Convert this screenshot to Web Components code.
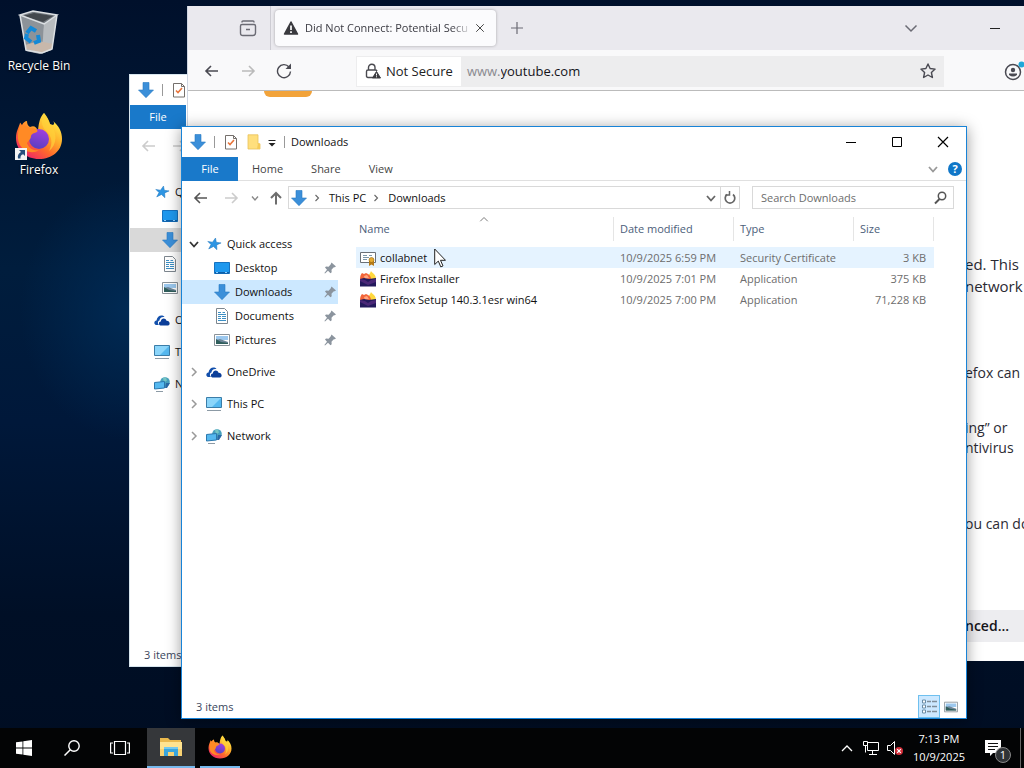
<!DOCTYPE html>
<html lang="en">
<head>
<meta charset="utf-8">
<title>Desktop</title>
<style>
    html, body {
        margin: 0;
        height: 100%;
    }
    body {
        font: 11px/16px "Open Sans", "Noto Sans", sans-serif;
        color: #111;
        overflow: hidden;
    }
</style>
</head>
<body>
<desk-top>
    <desktop-shortcut icon="bin">Recycle Bin</desktop-shortcut>
    <desktop-shortcut icon="firefox" linked>Firefox</desktop-shortcut>
    <explorer-window slot="windows" class="back" inactive></explorer-window>
    <browser-window slot="windows"></browser-window>
    <explorer-window slot="windows" class="front"></explorer-window>
    <task-bar slot="taskbar"></task-bar>
</desk-top>

<script>
const FIREFOX = `
    <defs>
        <linearGradient id="ff" x1=".85" y1=".1" x2=".2" y2=".95">
            <stop offset="0" stop-color="#fff04a"/><stop offset=".35" stop-color="#ffb02c"/>
            <stop offset=".65" stop-color="#ff6a2b"/><stop offset="1" stop-color="#ee2468"/>
        </linearGradient>
        <linearGradient id="fp" x1=".7" y1="0" x2=".4" y2="1">
            <stop offset="0" stop-color="#a13fe0"/><stop offset="1" stop-color="#5a3fc0"/>
        </linearGradient>
    </defs>
    <path fill="url(#ff)" d="M29 1c3 4 5 7 6 11l3 1c2-1 1-3 0-4 6 5 9 11 9 18 0 12-10 20-23 20S1 38 1 26c0-7 3-11 4-15 0-1 1 1 2 2 1-2 3-4 5-4 0 3 1 5 3 6 5-2 6 1 8 3 1-8 2-13 6-17z"/>
    <circle cx="24" cy="27" r="10" fill="url(#fp)"/>
    <path fill="#ff8a25" d="M5 14c5-1 7 1 10 2 5 0 9 2 7 4-2 1-5 1-6 4 0 3-2 4-4 7 2 6 7 8 12 7-7 5-17 1-20-7-2-6-1-12 1-17z"/>
    <path fill="#ffd23a" opacity=".7" d="M29 1c3 4 5 7 6 11 8 8 7 21-1 27 4-8 3-15-3-20-5-5-5-12-2-18z"/>`;

/* name: [viewBox, markup] */
const ICONS = {
    firefox: ['0 0 48 48', FIREFOX],
    bin: ['0 0 48 48', `
        <path fill="#a3a8ad" d="M5 8l9 10 27-4-4 28-12 4-14-3z"/>
        <path fill="#757b81" d="M5 7l13-4 24 4-13 9z"/>
        <path fill="#43484d" d="M8 8l11-3 19 3-10 6z"/>
        <path fill="#8d9399" d="M5 7l24 9-2 29-16-3z"/>
        <path fill="#b8bcbf" d="M29 16l13-9-5 34-10 4z"/>
        <path fill="#c8b8ab" d="M10 37l14-4 14 3-1 5-11 4-15-4z"/>
        <path fill="none" stroke="#dce0e3" stroke-width="1.5" d="M5 7l13-4 24 4-13 9zM5 7l6 35 16 3 10-4 5-34"/>
        <path fill="none" stroke="#1489d6" stroke-width="4" d="M12 25l4-5 5 3M23 27l1 6-5 2M16 34l-5-4 1-4"/>`],
    down: ['0 0 16 16', `<path fill="#3b8fd9" stroke="#2779c2" stroke-width=".6" d="M5 .5h6V8h4.500L8 15.700.5 8H5z"/>`],
    check: ['0 0 16 16', `<path fill="#fff" stroke="#75706c" d="M2.500 1.500h8l3 3v10.500h-11z"/><path fill="none" stroke="#75706c" d="M10.500 1.500v3h3"/><path fill="none" stroke="#e8743a" stroke-width="1.600" d="M5 8.500L7 10.500l4-4.500"/>`],
    folder: ['0 0 16 16', `<path fill="#ffdf7d" stroke="#e8c15c" stroke-width=".8" d="M2 .8h10v9h2v5.200H2z"/><path fill="#f5cb59" d="M12 9l2 1v5h-3z"/>`],
    qat: ['0 0 16 16', `<path stroke="#222" d="M4.500 6.500h7"/><path fill="#222" d="M4.500 9h7L8 12.500z"/>`],
    star: ['0 0 16 16', `<path fill="#2d95e3" stroke="#1c74bd" stroke-width=".5" d="M9.500 2l.8 4.300 4.800.6-4.400 2 .2 4.800-3.400-3.200-4.800 2.400 2.300-4.300L1.800 5.400l4.700.8z"/>`],
    desktop: ['0 0 16 16', `<path fill="#1e98ee" stroke="#1672c0" d="M.5 2.500h15v11H.5z"/><path fill="#0d5fa8" d="M1 12h14v1.500H1z"/><path fill="#8fd0ff" d="M2 12h2v1H2zM11 12h2v1h-2z"/>`],
    doc: ['0 0 16 16', `<path fill="#fff" stroke="#7d868e" d="M2.500.5h8l3 3v12h-11z"/><path stroke="#3c8fc4" d="M4 4.500h3M8.500 4.500H11M4 6.500h8M4 8.500h3M8 8.500h4M4 10.500h3M8 10.500h4M4 12.500h8"/>`],
    picture: ['0 0 16 16', `<path fill="#fff" stroke="#8a9299" d="M.5 2.500h15v11H.5z"/><path fill="#9cc8ee" d="M2 4h12v4H2z"/><path fill="#6d8598" d="M2 8l4-1 8 3v2H2z"/><path fill="#2f5e5b" d="M2 7l5 3 7 1v1H2z"/>`],
    cloud: ['0 0 16 16', `<path fill="#1350ac" d="M1.800 13C-.5 12 0 8.500 2.500 8.500 3 4 8 2 10.500 5c-3-.6-5 1.300-5 3.500C3.500 9 3.500 12 5 13z"/><path fill="#0b3e99" d="M6.500 13.500c-2.300-.5-2-4 .3-4C7 6 11.500 5.500 12.500 8.700c3-.3 4.500 3.800 1.500 4.800z"/>`],
    pc: ['0 0 16 16', `<path fill="#55b8ef" stroke="#3b7da8" d="M.5 1.500h15v10H.5z"/><path fill="#8bd5fa" d="M1 2h14L6 11H1z"/><path stroke="#8c9aa5" d="M1 14.500h14"/>`],
    network: ['0 0 16 16', `<circle cx="11" cy="6" r="4.800" fill="#48a1bd"/><path fill="#76c6c4" d="M9 2l3-.5 1 3-3 2z"/><path fill="#2a69a5" d="M12 7h4l-3 5h-2z"/><path fill="#55b8ef" stroke="#2b78ae" d="M.5 6.500l10-1v6.500l-10 1z"/><path stroke="#8c9aa5" d="M2 15.500h7"/>`],
    pin: ['0 0 16 16', `<path fill="#8b949e" d="M9.500 2.500l4.500 4-1.500.8-1 .2-2 2.200.2 2.500-1.200 1L6 10.700 3 13.500l-.6-.4L5 9.700 3 7.500l1-1 2.600.2 2-2.200z"/>`],
    cert: ['0 0 16 16', `<path fill="#fff" stroke="#6a7077" d="M.5 2.500h15v10H.5z"/><path stroke="#7b96a8" d="M3 5.500h4M9 5.500h3M3 7.500h6M3 9.500h4"/><path fill="#b77b19" d="M9 11h5v5l-2.500-1.500L9 16z"/><circle cx="11.500" cy="10" r="2.500" fill="#e7aa2f" stroke="#8f6414" stroke-width=".6"/>`],
    installer: ['0 0 16 16', `<path fill="#ffd83d" d="M11 0c1 2 5 3 5 8H7c1-4 3-5 4-8z"/><path fill="#f2653a" d="M0 8c0-3 1-5 2-6l2 1 2-1c3 1 5 3 5 6z"/><path fill="#ffa77f" d="M4 5l3-1 2 3-4 1z"/><path fill="#231a5c" d="M0 8l4-1 5 1 7-1v8.500H0z"/><path fill="#4a2877" d="M0 8l5 1 3 2 3-2 5-1v3l-8 3-8-4z"/>`],
    left: ['0 0 16 16', `<path fill="none" stroke="currentColor" stroke-width="1.600" d="M14 8H2.500M7 3L2 8l5 5"/>`],
    right: ['0 0 16 16', `<path fill="none" stroke="currentColor" stroke-width="1.600" d="M2 8h11.500M9 3l5 5-5 5"/>`],
    up: ['0 0 16 16', `<path fill="none" stroke="currentColor" stroke-width="2" d="M8 14.500V3M3 8l5-5 5 5"/>`],
    chevdown: ['0 0 16 16', `<path fill="none" stroke="currentColor" stroke-width="1.800" d="M4 6l4 4.500L12 6"/>`],
    expand: ['0 0 16 16', `<path fill="none" stroke="currentColor" stroke-width="1.500" d="M2.500 5.500L8 11l5.500-5.500"/>`],
    chevup: ['0 0 16 16', `<path fill="none" stroke="currentColor" stroke-width="1.300" d="M3 11l5-5 5 5"/>`],
    chevright: ['0 0 16 16', `<path fill="none" stroke="currentColor" stroke-width="1.500" d="M6 4l4 4-4 4"/>`],
    refresh: ['0 0 16 16', `<path fill="none" stroke="currentColor" stroke-width="1.700" d="M5 4.500a4.800 4.800 0 1 0 6 0"/><path fill="none" stroke="currentColor" stroke-width="1.500" d="M7.500 1v4h-4"/>`],
    search: ['0 0 16 16', `<circle cx="10" cy="6" r="3.700" fill="none" stroke="currentColor" stroke-width="1.500"/><path stroke="currentColor" stroke-width="2" d="M7.500 9L3 13.500"/>`],
    min: ['0 0 16 16', `<path stroke="currentColor" d="M3 8.500h10"/>`],
    max: ['0 0 16 16', `<path fill="none" stroke="currentColor" d="M3.500 3.500h9v9h-9z"/>`],
    close: ['0 0 16 16', `<path stroke="currentColor" stroke-width="1.200" d="M3 3l10 10M13 3L3 13"/>`],
    details: ['0 0 18 18', `<path fill="#fff" stroke="#6b8ca5" d="M2.500 2.500h3v3h-3zM2.500 7.500h3v3h-3zM2.500 12.500h3v3h-3z"/><path stroke="#7f8d99" stroke-width="1.500" d="M7 4h4M12 4h5M7 9h4M12 9h5M7 14h4M12 14h5"/>`],
    tabview: ['0 0 20 20', `<path fill="none" stroke="currentColor" stroke-width="1.400" d="M4 4.500V4q0-1 1-1h10q1 0 1 1v.5M4 6.500h12q1.500 0 1.500 1.500v7q0 2.500-2.500 2.500H5Q2.500 17.500 2.500 15V8Q2.500 6.500 4 6.500zM8 11.500h4"/>`],
    warning: ['0 0 16 16', `<path fill="#3a3a3f" stroke="#3a3a3f" stroke-width="1.500" stroke-linejoin="round" d="M8 2l6.500 12h-13z"/><path stroke="#fff" stroke-width="1.700" d="M8 5.500v4.500M8 11.300v1.700"/>`],
    lock: ['0 0 16 16', `<path fill="none" stroke="#4a4a50" stroke-width="1.400" d="M3.500 7V4.500a3.200 3.200 0 0 1 6.500 0V7M8 14.500H3q-1.500 0-1.500-1.500V8.500Q1.500 7 3 7h7.500q1 0 1.500 1"/><path fill="#3a3a3f" stroke="#3a3a3f" stroke-linejoin="round" d="M11.500 8.500l4 6.500h-8z"/><path stroke="#fff" d="M11.500 10.500v2M11.500 13.300v1"/>`],
    reload: ['0 0 16 16', `<path fill="none" stroke="currentColor" stroke-width="1.400" d="M13 4a6.500 6.500 0 1 0 1.500 4.500"/><path fill="currentColor" d="M15 .5V6H9.500z"/>`],
    bookmark: ['0 0 16 16', `<path fill="none" stroke="currentColor" stroke-width="1.400" stroke-linejoin="round" d="M8 1l2.100 4.500 5 .6-3.700 3.400 1 5L8 12l-4.400 2.500 1-5L.9 6.100l5-.6z"/>`],
    account: ['0 0 20 20', `<circle cx="9" cy="11" r="7.500" fill="none" stroke="currentColor" stroke-width="1.500"/><circle cx="9" cy="9" r="2.200" fill="currentColor"/><path fill="currentColor" d="M5 12.500h8v1.500q-4 3-8 0z"/><circle cx="17.500" cy="3.500" r="3" fill="#1fa7d8"/>`],
    plus: ['0 0 16 16', `<path stroke="currentColor" stroke-width="1.200" d="M8 2v12M2 8h12"/>`],
    start: ['0 0 16 16', `<path fill="#fff" d="M0 2.300l6.500-.9v6.100H0zM7.300 1.300L16 0v7.500H7.300zM0 8.400h6.500v6.200L0 13.700zM7.300 8.400H16V16l-8.700-1.300z"/>`],
    find: ['0 0 16 16', `<circle cx="10" cy="6" r="5.200" fill="none" stroke="#fff" stroke-width="1.400"/><path stroke="#fff" stroke-width="1.500" d="M6.300 9.700L.5 15.500"/>`],
    taskview: ['0 0 20 16', `<path fill="none" stroke="#fff" stroke-width="1.200" d="M4.500 1.500h11v13h-11zM3 3H.6v10H3M17 3h2.400v10H17"/>`],
    explorer: ['0 0 24 20', `<path fill="#eab94d" d="M1 1h8l2 2h11v4H1z"/><path fill="#ffe38f" d="M1 5h22v14H1z"/><path fill="#f7d273" d="M1 12h22v7H1z"/><path fill="#39a5dc" d="M5 19v-8h14v8h-4v-4H9v4z"/><path fill="#74c9ee" d="M5 10h14v2H5z"/>`],
    lan: ['0 0 16 16', `<path fill="none" stroke="#fff" d="M4.500 2.500h11v8h-11zM9.500 10.500v4M6 14.500h8"/><path fill="#000" stroke="#fff" d="M.5 1.500h4v4h-4zM2.500 5.500v7"/>`],
    sound: ['0 0 16 16', `<path fill="none" stroke="#fff" d="M.5 5.500h3l4-4v13l-4-4h-3z"/><circle cx="12" cy="11" r="4" fill="#d32f3a"/><path stroke="#fff" stroke-width="1.200" d="M10.200 9.200l3.600 3.600M13.800 9.200l-3.600 3.600"/>`],
    note: ['0 0 16 16', `<path fill="#fff" d="M0 0h16v13H8l-3 3v-3H0z"/><path stroke="#111" d="M3 3.500h10M3 6.500h10M3 9.500h7"/>`],
    shortcut: ['0 0 12 12', `<path fill="#f4f4f4" d="M0 0h12v12H0z"/><path fill="#28507c" d="M4 2h6v6L8.200 6.200Q5 7 5.500 10.500H3Q2 6 6 4z"/>`],
    pointer: ['0 0 12 20', `<path fill="#fff" stroke="#222" d="M.7 1v15.500l3.600-3.400 2.500 5.800 2.200-1-2.500-5.600h5z"/>`]
};

class SysIcon extends HTMLElement {
    constructor() {
        super();
        this.attachShadow({ mode: 'open' });
    }
    connectedCallback() {
        const [box, markup] = ICONS[this.getAttribute('name')];
        this.shadowRoot.innerHTML = `
        <style>
            :host { display: block; flex: none; width: 16px; height: 16px; }
            svg { display: block; width: 100%; height: 100%; }
        </style>
        <svg viewBox="${box}" aria-hidden="true">${markup}</svg>
        `;
    }
}

class DesktopShortcut extends HTMLElement {
    constructor() {
        super();
        this.attachShadow({ mode: 'open' });
    }
    connectedCallback() {
        this.shadowRoot.innerHTML = `
        <style>
            :host { display: block; width: 78px; height: 104px; font-size: 12px; }
            button {
                display: flex;
                flex-direction: column;
                align-items: center;
                gap: 2px;
                width: 100%;
                padding: 8px 0 0;
                border: 0;
                background: none;
                color: #fff;
                font: inherit;
                text-shadow: 0 1px 2px #000;
            }
            .pic { position: relative; }
            .pic sys-icon { width: 48px; height: 48px; }
            .pic .link { position: absolute; left: 0; bottom: 0; width: 12px; height: 12px; }
        </style>
        <button>
            <span class="pic">
                <sys-icon name="${this.getAttribute('icon')}"></sys-icon>
                ${this.hasAttribute('linked') ? '<sys-icon class="link" name="shortcut"></sys-icon>' : ''}
            </span>
            <slot></slot>
        </button>
        `;
    }
}

class DeskTop extends HTMLElement {
    constructor() {
        super();
        this.attachShadow({ mode: 'open' });
        this.shadowRoot.innerHTML = `
        <style>
            :host {
                display: flex;
                flex-direction: column;
                height: 100vh;
                background:
                    radial-gradient(ellipse 110px 130px at 130px 310px, #002a54, transparent),
                    linear-gradient(#00102b, #001d3d 35%, #00183a 55%, #000f26 80%, #000d22);
            }
            .area { position: relative; flex: 1; overflow: hidden; }
            /* windows float freely over the desktop */
            ::slotted(explorer-window), ::slotted(browser-window) { position: absolute; }
            ::slotted(.back) { inset: 74px 109px 61px 129px; }
            ::slotted(browser-window) { inset: 6px 0 67px 187px; }
            ::slotted(.front) { inset: 126px 57px 9px 181px; }
            .pointer { position: absolute; left: 434px; top: 248px; width: 12px; height: 20px; }
        </style>
        <div class="area">
            <slot></slot>
            <slot name="windows"></slot>
            <sys-icon class="pointer" name="pointer"></sys-icon>
        </div>
        <slot name="taskbar"></slot>
        `;
    }
}

class NavItem extends HTMLElement {
    constructor() {
        super();
        this.attachShadow({ mode: 'open' });
    }
    connectedCallback() {
        const toggle = this.getAttribute('toggle');
        this.shadowRoot.innerHTML = `
        <style>
            :host { display: block; }
            :host([root]) { margin-top: 8px; }
            button {
                display: flex;
                align-items: center;
                gap: 5px;
                width: 100%;
                height: 24px;
                padding: 0 0 0 4px;
                border: 0;
                background: none;
                color: inherit;
                font: inherit;
                text-align: left;
            }
            :host([child]) button { padding-left: 12px; }
            :host([selected]) button { background: var(--selected, #cce8ff); }
            .toggle { color: #333; margin-right: -1px; }
            .toggle[name=chevright] { color: #999; }
            .pin { margin-left: auto; }
        </style>
        <button>
            <sys-icon class="toggle" name="${toggle || 'chevright'}" style="${toggle ? '' : 'visibility: hidden'}"></sys-icon>
            <sys-icon name="${this.getAttribute('icon')}"></sys-icon>
            <slot></slot>
            ${this.hasAttribute('child') ? '<sys-icon class="pin" name="pin"></sys-icon>' : ''}
        </button>
        `;
    }
}

class FileList extends HTMLElement {
    constructor() {
        super();
        this.attachShadow({ mode: 'open' });
        const files = [
            ['cert', 'collabnet', '10/9/2025 6:59 PM', 'Security Certificate', '3 KB'],
            ['installer', 'Firefox Installer', '10/9/2025 7:01 PM', 'Application', '375 KB'],
            ['installer', 'Firefox Setup 140.3.1esr win64', '10/9/2025 7:00 PM', 'Application', '71,228 KB']
        ];
        this.shadowRoot.innerHTML = `
        <style>
            :host { display: block; }
            table { width: 100%; table-layout: fixed; border-collapse: separate; border-spacing: 0; }
            th, td { padding: 0 6px; font-weight: 400; text-align: left; white-space: nowrap; }
            th { position: relative; height: 24px; border-right: 1px solid #e5e5e5; color: #4c607a; }
            th:first-child { padding-left: 3px; }
            .sort { position: absolute; top: -4px; left: calc(50% - 7px); width: 12px; height: 12px; color: #777; }
            .date, .type { width: 107px; }
            .size { width: 67px; }
            tbody::before { content: ""; display: block; height: 6px; }
            td { height: 21px; color: #6d6d6d; }
            td:first-child { padding-left: 4px; color: #111; }
            td:last-child { text-align: right; padding-right: 8px; }
            tr.hover { background: #e5f3ff; }
            .name { display: flex; align-items: center; gap: 4px; }
        </style>
        <table>
            <thead>
                <tr>
                    <th>Name<sys-icon class="sort" name="chevup"></sys-icon></th>
                    <th class="date">Date modified</th>
                    <th class="type">Type</th>
                    <th class="size">Size</th>
                </tr>
            </thead>
            <tbody>
                ${files.map(([icon, name, date, type, size], i) => `
                <tr class="${i === 0 ? 'hover' : ''}">
                    <td><span class="name"><sys-icon name="${icon}"></sys-icon>${name}</span></td>
                    <td>${date}</td><td>${type}</td><td>${size}</td>
                </tr>`).join('')}
            </tbody>
        </table>
        `;
    }
}

class ExplorerWindow extends HTMLElement {
    constructor() {
        super();
        this.attachShadow({ mode: 'open' });
    }
    get inactive() {
        return this.hasAttribute('inactive');
    }
    connectedCallback() {
        const active = !this.inactive;
        const root = active ? 'toggle="chevright"' : '';
        this.shadowRoot.innerHTML = `
        <style>
            :host {
                display: flex;
                flex-direction: column;
                box-sizing: border-box;
                border: 1px solid #1883d7;
                background: #fff;
                box-shadow: 0 2px 14px rgba(0, 0, 0, .4);
            }
            :host([inactive]) { border-color: #d8e6ee; box-shadow: none; --selected: #d9d9d9; }
            button { border: 0; padding: 0; background: none; color: inherit; font: inherit; }
            .title { display: flex; align-items: center; height: 30px; padding-left: 8px; }
            .title > i { width: 1px; height: 12px; margin: 0 8px; background: #999; }
            .title .next { margin-left: 7px; }
            .title .gap { margin-left: 2px; }
            .title .last { margin: 0 6px 0 4px; }
            .caption { display: flex; margin-left: auto; color: #000; }
            .caption button { display: grid; place-items: center; width: 46px; height: 30px; }
            .ribbon {
                display: flex;
                align-items: center;
                box-sizing: border-box;
                height: 24px;
                border-bottom: 1px solid #e0e0e0;
                color: #444;
            }
            .ribbon button { height: 24px; padding: 0 14px; }
            .ribbon .file { width: 56px; background: #1979ca; color: #fff; }
            .ribbon sys-icon { margin-left: auto; margin-right: 7px; color: #999; }
            .ribbon .help {
                width: 14px;
                height: 14px;
                margin-right: 4px;
                padding: 0;
                border-radius: 50%;
                background: #1077c8;
                color: #fff;
                font-weight: 700;
                line-height: 14px;
            }
            .bar { display: flex; align-items: center; height: 33px; padding: 0 12px 0 11px; color: #555; }
            .bar .fwd { margin-left: 14px; color: #ccc; }
            .bar .recent { width: 12px; margin: 0 7px 0 10px; color: #888; }
            .bar .up { margin-right: 4px; color: #6d6d6d; }
            .address, .search {
                display: flex;
                align-items: center;
                box-sizing: border-box;
                height: 23px;
                border: 1px solid #d9d9d9;
            }
            .address { flex: 1; padding-left: 2px; margin-right: 12px; color: #111; }
            .address sys-icon { color: #666; }
            .address .sep { width: 12px; height: 12px; margin: 0 6px 0 4px; }
            .address .drop { margin-left: auto; margin-right: 1px; }
            .address .refresh { display: grid; place-items: center; width: 19px; height: 21px; border-left: 1px solid #d9d9d9; }
            .search { width: 202px; padding: 0 5px 0 8px; }
            .search input { flex: 1; min-width: 0; padding: 0; border: 0; outline: 0; font: inherit; }
            .search input::placeholder { color: #6d6d6d; }
            .main { display: flex; flex: 1; min-height: 0; }
            nav { width: 156px; padding-top: 18px; }
            file-list { flex: 1; margin: 3px 32px 0 18px; }
            footer { display: flex; align-items: center; height: 23px; padding: 0 7px 0 14px; color: #39455c; }
            footer .modes { display: flex; align-items: center; gap: 3px; margin-left: auto; }
            footer .details { padding: 1px; border: 1px solid #6fc0ef; background: #cce8ff; }
            footer .details sys-icon { width: 18px; height: 19px; }
            footer .thumbs sys-icon { width: 14px; height: 14px; margin: 0 1px; }
        </style>
        <div class="title">
            <sys-icon name="down"></sys-icon><i></i>
            <sys-icon name="check"></sys-icon>
            ${active ? `
            <sys-icon class="next" name="folder"></sys-icon>
            <sys-icon class="gap" name="qat"></sys-icon><i class="last"></i>
            <span>Downloads</span>
            <div class="caption">
                <button aria-label="Minimize"><sys-icon name="min"></sys-icon></button>
                <button aria-label="Maximize"><sys-icon name="max"></sys-icon></button>
                <button aria-label="Close"><sys-icon name="close"></sys-icon></button>
            </div>` : ''}
        </div>
        <div class="ribbon">
            <button class="file">File</button>
            ${active ? `
            <button>Home</button><button>Share</button><button>View</button>
            <sys-icon name="chevdown"></sys-icon>
            <button class="help">?</button>` : ''}
        </div>
        <div class="bar" style="${active ? '' : 'color: #ccc'}">
            <button aria-label="Back"><sys-icon name="left"></sys-icon></button>
            <button class="fwd" aria-label="Forward"><sys-icon name="right"></sys-icon></button>
            ${active ? `
            <sys-icon class="recent" name="chevdown"></sys-icon>
            <button class="up" aria-label="Up"><sys-icon name="up"></sys-icon></button>
            <div class="address">
                <sys-icon name="down"></sys-icon>
                <sys-icon class="sep" name="chevright"></sys-icon>
                <button>This PC</button>
                <sys-icon class="sep" name="chevright"></sys-icon>
                <button>Downloads</button>
                <sys-icon class="drop" name="chevdown"></sys-icon>
                <button class="refresh" aria-label="Refresh"><sys-icon name="refresh"></sys-icon></button>
            </div>
            <div class="search">
                <input type="text" placeholder="Search Downloads" aria-label="Search Downloads">
                <sys-icon name="search"></sys-icon>
            </div>` : ''}
        </div>
        <div class="main">
            <nav>
                <nav-item icon="star" ${active ? 'toggle="chevdown"' : ''}>Quick access</nav-item>
                <nav-item child icon="desktop">${active ? 'Desktop' : ''}</nav-item>
                <nav-item child selected icon="down">${active ? 'Downloads' : ''}</nav-item>
                <nav-item child icon="doc">${active ? 'Documents' : ''}</nav-item>
                <nav-item child icon="picture">${active ? 'Pictures' : ''}</nav-item>
                <nav-item root icon="cloud" ${root}>OneDrive</nav-item>
                <nav-item root icon="pc" ${root}>This PC</nav-item>
                <nav-item root icon="network" ${root}>Network</nav-item>
            </nav>
            ${active ? '<file-list></file-list>' : ''}
        </div>
        <footer>
            3 items
            ${active ? `
            <div class="modes">
                <button class="details" aria-label="Details"><sys-icon name="details"></sys-icon></button>
                <button class="thumbs" aria-label="Large icons"><sys-icon name="picture"></sys-icon></button>
            </div>` : ''}
        </footer>
        `;
    }
}

class BrowserWindow extends HTMLElement {
    constructor() {
        super();
        this.attachShadow({ mode: 'open' });
        this.shadowRoot.innerHTML = `
        <style>
            :host {
                display: flex;
                flex-direction: column;
                box-sizing: border-box;
                border-left: 1px solid #cfd6e2;
                background: #fff;
                overflow: hidden;
            }
            button { display: grid; place-items: center; border: 0; padding: 0; background: none; color: #6b6b74; font: inherit; }
            .tabs { display: flex; align-items: center; height: 44px; padding: 0 6px 0 44px; background: #eae9ee; }
            .view { width: 32px; height: 32px; }
            .view sys-icon { width: 20px; height: 20px; }
            .tabs > i { width: 1px; height: 44px; margin: 0 4px 0 6px; background: #cdccd3; }
            .tab {
                display: flex;
                align-items: center;
                box-sizing: border-box;
                width: 221px;
                height: 36px;
                padding: 0 8px;
                border-radius: 4px;
                background: #fbfbfd;
                box-shadow: 0 0 3px rgba(0, 0, 0, .3);
                color: #3a3a42;
            }
            .tab span {
                flex: 1;
                margin-left: 6px;
                overflow: hidden;
                white-space: nowrap;
                -webkit-mask-image: linear-gradient(90deg, #000 88%, transparent);
                mask-image: linear-gradient(90deg, #000 88%, transparent);
            }
            .tab button sys-icon { width: 12px; height: 12px; margin: 0 2px; color: #333; }
            .new { width: 32px; height: 32px; margin-left: 5px; }
            .list { margin-left: auto; margin-right: 53px; }
            .min { width: 46px; color: #222; }
            .tools {
                display: flex;
                align-items: center;
                box-sizing: border-box;
                height: 41px;
                padding: 2px 0 0 16px;
                border-bottom: 1px solid #bbb;
                background: #f9f9fa;
            }
            .tools > button { margin-right: 20px; color: #4a4a52; }
            .tools > .off { color: #bbb; }
            .url {
                display: flex;
                align-items: center;
                flex: 1;
                height: 31px;
                margin: 0 60px 0 44px;
                background: #ededee;
                font-size: 13px;
                line-height: 20px;
                color: #8a8a90;
            }
            .url .id { grid-auto-flow: column; gap: 5px; height: 29px; margin: 0 6px 0 1px; padding: 0 8px; background: #fff; color: #222; }
            .url input { flex: 1; min-width: 0; padding: 0; border: 0; outline: 0; background: none; color: #15141a; font: inherit; }
            .url .mark { margin-right: 8px; color: #4a4a52; }
            .tools .account { margin: 0; }
            .account sys-icon { width: 20px; height: 20px; }
            .page { flex: 1; }
            .accent { width: 48px; height: 6px; margin-left: 76px; border-radius: 0 0 6px 6px; background: #f2a33a; }
            /* only the right edge of the article shows beside the front window */
            article {
                width: 59px;
                margin-left: auto;
                padding-top: 156px;
                white-space: nowrap;
                font-size: 14px;
                line-height: 20px;
                color: #2b2a33;
            }
            p { margin: 0 0 35px; }
            .lead { margin-bottom: 66px; font-size: 15px; line-height: 22px; }
            .wide { margin-bottom: 56px; }
            .more { display: block; width: 100%; height: 32px; margin-top: 76px; background: #ededf0; color: #15141a; font-weight: 600; text-align: left; }
        </style>
        <div class="tabs">
            <button class="view" aria-label="Firefox View"><sys-icon name="tabview"></sys-icon></button>
            <i></i>
            <div class="tab">
                <sys-icon name="warning"></sys-icon>
                <span>Did Not Connect: Potential Secu</span>
                <button aria-label="Close tab"><sys-icon name="close"></sys-icon></button>
            </div>
            <button class="new" aria-label="New tab"><sys-icon name="plus"></sys-icon></button>
            <button class="list" aria-label="List all tabs"><sys-icon name="expand"></sys-icon></button>
            <button class="min" aria-label="Minimize"><sys-icon name="min"></sys-icon></button>
        </div>
        <div class="tools">
            <button aria-label="Back"><sys-icon name="left"></sys-icon></button>
            <button class="off" aria-label="Forward"><sys-icon name="right"></sys-icon></button>
            <button aria-label="Reload"><sys-icon name="reload"></sys-icon></button>
            <div class="url">
                <button class="id"><sys-icon name="lock"></sys-icon>Not Secure</button>
                <label for="address">www.</label><input id="address" type="text" value="youtube.com">
                <button class="mark" aria-label="Bookmark"><sys-icon name="bookmark"></sys-icon></button>
            </div>
            <button class="account" aria-label="Account"><sys-icon name="account"></sys-icon></button>
        </div>
        <div class="page">
            <div class="accent"></div>
            <article>
                <p class="lead">ed. This<br>network</p>
                <p>efox can</p>
                <p class="wide">ing” or<br>ntivirus</p>
                <p>ou can do</p>
                <button class="more">nced...</button>
            </article>
        </div>
        `;
    }
}

class TaskBar extends HTMLElement {
    constructor() {
        super();
        this.attachShadow({ mode: 'open' });
        this.shadowRoot.innerHTML = `
        <style>
            :host { display: flex; height: 40px; background: #030405; color: #fff; }
            button { display: grid; place-items: center; box-sizing: border-box; width: 48px; border: 0; padding: 0; background: none; }
            .wide { width: 20px; }
            .open { margin-left: 3px; background: #35373a; border-bottom: 2px solid #76b9ed; }
            .open sys-icon { width: 24px; height: 20px; }
            .running { width: 40px; margin-left: 5px; border-bottom: 2px solid #76b9ed; }
            .running sys-icon { width: 24px; height: 24px; }
            .tray { display: flex; align-items: center; gap: 8px; margin-left: auto; }
            .clock { margin: 0 11px 0 2px; text-align: center; line-height: 18px; }
            .note { position: relative; width: 28px; height: 24px; place-items: start; padding: 4px 0 0 1px; }
            .note b {
                position: absolute;
                right: 1px;
                bottom: -3px;
                width: 14px;
                height: 14px;
                border: 1px solid #888;
                border-radius: 50%;
                background: #303336;
                color: #fff;
                font: 11px/14px "Open Sans", sans-serif;
            }
            .peek { align-self: stretch; width: 4px; border-left: 1px solid #666; }
        </style>
        <button aria-label="Start"><sys-icon name="start"></sys-icon></button>
        <button aria-label="Search"><sys-icon name="find"></sys-icon></button>
        <button aria-label="Task view"><sys-icon class="wide" name="taskview"></sys-icon></button>
        <button class="open" aria-label="File Explorer"><sys-icon name="explorer"></sys-icon></button>
        <button class="running" aria-label="Firefox"><sys-icon name="firefox"></sys-icon></button>
        <div class="tray">
            <sys-icon name="chevup"></sys-icon>
            <sys-icon name="lan"></sys-icon>
            <sys-icon name="sound"></sys-icon>
            <div class="clock">7:13 PM<br>10/9/2025</div>
            <button class="note" aria-label="Notifications"><sys-icon name="note"></sys-icon><b>1</b></button>
            <button class="peek" aria-label="Show desktop"></button>
        </div>
        `;
    }
}

customElements.define('sys-icon', SysIcon);
customElements.define('desktop-shortcut', DesktopShortcut);
customElements.define('desk-top', DeskTop);
customElements.define('nav-item', NavItem);
customElements.define('file-list', FileList);
customElements.define('explorer-window', ExplorerWindow);
customElements.define('browser-window', BrowserWindow);
customElements.define('task-bar', TaskBar);
</script>
</body>
</html>
